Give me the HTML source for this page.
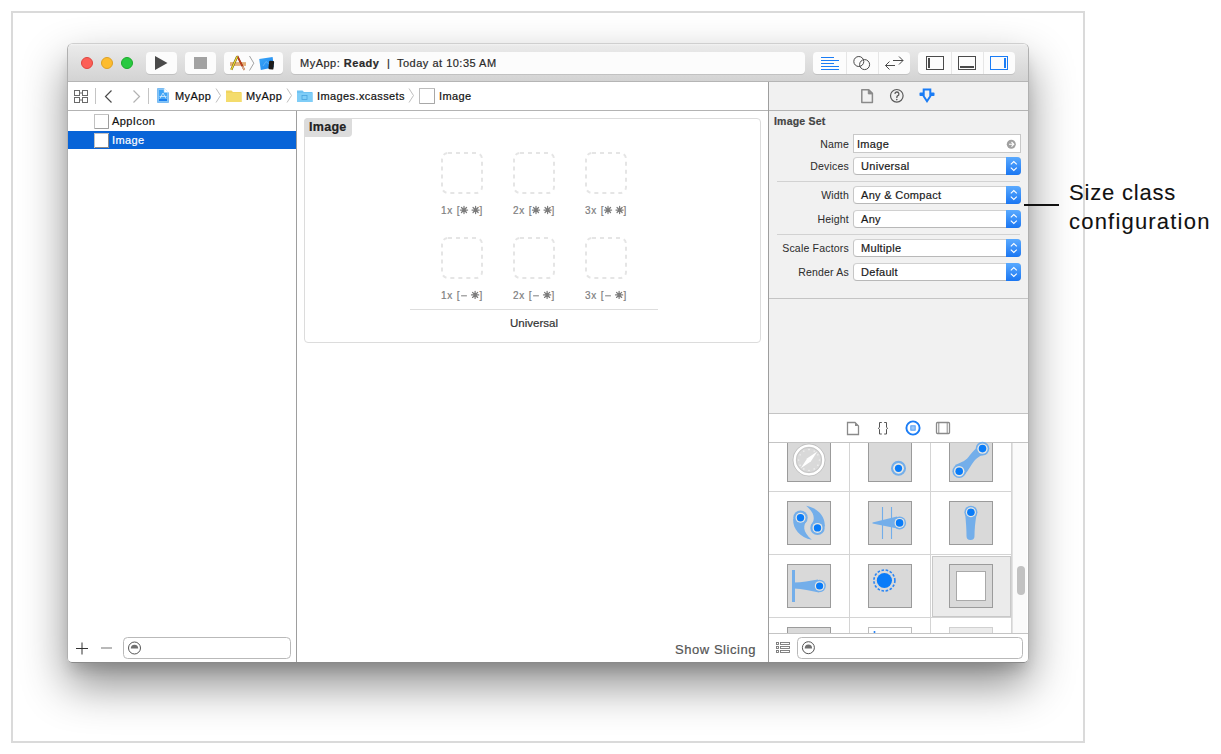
<!DOCTYPE html>
<html><head><meta charset="utf-8">
<style>
*{margin:0;padding:0;box-sizing:border-box}
html,body{width:1221px;height:754px;overflow:hidden;background:#fff;font-family:"Liberation Sans",sans-serif;color:#222}
.a{position:absolute}
.tx{position:absolute;line-height:1;white-space:nowrap;-webkit-text-stroke:0.2px currentColor}
svg{position:absolute;overflow:visible}
#frame{left:11px;top:11px;width:1074px;height:732px;border:2px solid #dadada}
#shadow{left:67px;top:43px;width:962px;height:620px;border-radius:6px 6px 5px 5px;box-shadow:0 22px 45px rgba(0,0,0,0.45),0 10px 14px -4px rgba(0,0,0,0.14)}
#win{left:67px;top:43px;width:962px;height:620px;border-radius:6px 6px 5px 5px;background:#fff;border:1px solid #b0b0b0;border-top-color:#cfcfcf;border-bottom-color:#8a8a8a}
#title{left:68px;top:44px;width:960px;height:38px;background:linear-gradient(#f3f3f3 0px,#eaeaea 2px,#d3d3d3 37px);border-bottom:1px solid #b5b5b5;border-radius:5px 5px 0 0}
.light{width:12px;height:12px;border-radius:50%;top:57px}
.btn{background:#fcfcfc;border-radius:4px;box-shadow:0 1px 0 rgba(0,0,0,0.10)}
.sep{background:#e6e6e6;width:1px}
.t11{font-size:11px;letter-spacing:0.4px}
.hl{height:1px}
.popup{position:absolute;left:853px;width:168px;height:18px;background:#fff;border:1px solid #c6c6c6;border-top-color:#d0d0d0;border-bottom-color:#b8b8b8;border-radius:4px}
.popup .st{position:absolute;right:-1px;top:-1px;width:15.5px;height:18px;border-radius:0 4px 4px 0;background:linear-gradient(#5aaaff,#1a76f2)}
.popup .st svg{left:0;top:0}
.lbl{font-size:10.5px;color:#2e2e2e;letter-spacing:0.2px;-webkit-text-stroke:0.05px currentColor}
.val{font-size:11px;color:#1a1a1a;letter-spacing:0.3px}
.slot{position:absolute;width:42px;height:42px}
.sl{font-size:10px;color:#808080;letter-spacing:0.8px}
.ic{position:absolute;width:44px;height:44px;background:#d9d9d9;border:1px solid #9b9b9b}
</style></head><body>
<div id="frame" class="a"></div>
<div id="shadow" class="a"></div>
<div id="win" class="a"></div>

<!-- TITLE BAR -->
<div id="title" class="a"></div>
<div class="a light" style="left:81px;background:#fc5f57;border:0.5px solid #e0443e"></div>
<div class="a light" style="left:101px;background:#fdbc2e;border:0.5px solid #dea123"></div>
<div class="a light" style="left:121px;background:#28c940;border:0.5px solid #1aab29"></div>
<div class="a btn" style="left:146px;top:52px;width:31px;height:22px"></div>
<div class="a btn" style="left:185px;top:52px;width:31px;height:22px"></div>
<div class="a btn" style="left:224px;top:52px;width:59px;height:22px"></div>
<div class="a btn" style="left:291px;top:52px;width:514px;height:22px"></div>
<div class="a btn" style="left:813px;top:52px;width:97px;height:22px"></div>
<div class="a btn" style="left:918px;top:52px;width:97px;height:22px"></div>
<div class="a sep" style="left:846px;top:52px;height:22px"></div>
<div class="a sep" style="left:878px;top:52px;height:22px"></div>
<div class="a sep" style="left:951px;top:52px;height:22px"></div>
<div class="a sep" style="left:983px;top:52px;height:22px"></div>
<!-- play / stop -->
<svg style="left:0;top:0" width="1" height="1"><path d="M155 56 L167.5 63 L155 70 Z" fill="#4a4a4a"/><rect x="194" y="57" width="13" height="12" fill="#a2a2a2"/></svg>
<!-- scheme icons -->
<svg style="left:0;top:0" width="1" height="1">
  <defs><linearGradient id="dg" x1="0" y1="0" x2="1" y2="1"><stop offset="0" stop-color="#3aa6f8"/><stop offset="1" stop-color="#1f86ee"/></linearGradient></defs>
  <rect x="230" y="62.3" width="16" height="3.4" fill="#e8b47c"/>
  <path d="M230 62.8H246M230 65.3H246" stroke="#d09a60" stroke-width="0.5"/>
  <path d="M237.3 56L244.3 69.8" stroke="#8a2a10" stroke-width="1.7"/>
  <path d="M237.3 56L244.3 69.8" stroke="#c8401c" stroke-width="1.1"/>
  <path d="M242.5 66.3L244.5 70" stroke="#d8b090" stroke-width="1.6"/>
  <path d="M231.3 69.8L237.3 56.2" stroke="#6a5a20" stroke-width="2.2"/>
  <path d="M231.3 69.8L237.3 56.2" stroke="#f2e030" stroke-width="1.2"/>
  <path d="M249.5 56L253.8 63.2L249.5 70.5" stroke="#8a8a8a" fill="none" stroke-width="0.8"/>
  <path d="M259.2 58.9L272.6 57.1L273.9 67.3L260.8 69.9Z" fill="url(#dg)"/>
  <path d="M263 66L266 61.5L269 64" stroke="#8ccaf8" stroke-width="0.5" fill="none"/>
  <rect x="268.8" y="60.8" width="5" height="8.6" rx="1" fill="#1c1c1c" transform="rotate(6 271.3 65)"/>
</svg>
<!-- status -->
<div class="tx t11" style="left:300px;top:58px;color:#2a2a2a;letter-spacing:0.5px">MyApp: <b>Ready</b></div><div class="tx t11" style="left:387px;top:58px;color:#2a2a2a">|</div><div class="tx t11" style="left:397px;top:58px;color:#2a2a2a;letter-spacing:0.5px">Today at 10:35 AM</div>
<!-- editor buttons -->
<svg style="left:0;top:0" width="1" height="1" fill="none">
  <g stroke="#1a7cf5" stroke-width="1">
    <path d="M821 57.5H834M821 60.5H839M821 63.5H834M821 66.5H839M821 69.5H839"/>
  </g>
  <g stroke="#4a4a4a" stroke-width="1">
    <circle cx="858.8" cy="61.5" r="5"/><circle cx="864.6" cy="64.6" r="5"/>
    <path d="M893 60.5H903M899 56.5L903 60.5L899 64.5M885.5 65.5H895M889.5 61.5L885.5 65.5L889.5 69.5"/>
    <rect x="926.5" y="56.5" width="17" height="13"/>
    <rect x="958.5" y="56.5" width="17" height="13"/>
  </g>
  <rect x="928" y="58" width="2" height="10" fill="#4a4a4a"/>
  <rect x="960" y="66" width="14" height="2" fill="#4a4a4a"/>
  <rect x="990.5" y="56.5" width="17" height="13" stroke="#1a7cf5"/>
  <rect x="1004" y="58" width="2" height="10" fill="#1a7cf5"/>
</svg>

<!-- BREADCRUMB BAR -->
<div class="a" style="left:68px;top:82px;width:700px;height:29px;background:#fff;border-bottom:1px solid #b3b3b3"></div>
<div class="a" style="left:769px;top:82px;width:259px;height:29px;background:#f1f1f1;border-bottom:1px solid #b3b3b3"></div>
<div class="a" style="left:768px;top:82px;width:1px;height:580px;background:#9e9e9e"></div>
<div class="a" style="left:296px;top:111px;width:1px;height:551px;background:#9e9e9e"></div>
<svg style="left:0;top:0" width="1" height="1" fill="none">
  <g stroke="#6a6a6a" stroke-width="1">
    <rect x="74.5" y="90.5" width="5" height="5"/><rect x="82.5" y="90.5" width="5" height="5"/>
    <rect x="74.5" y="97.5" width="5" height="5"/><rect x="82.5" y="97.5" width="5" height="5"/>
    <path d="M80 93H82M80 100H82"/>
  </g>
  <path d="M95.5 88V104M148.5 88V104" stroke="#c4c4c4"/>
  <path d="M111.5 90.5L105.5 96.5L111.5 102.5" stroke="#4a4a4a" stroke-width="1.2"/>
  <path d="M133.5 90.5L139.5 96.5L133.5 102.5" stroke="#b2b2b2" stroke-width="1.2"/>
  <path d="M216 88.5L220.5 95.5L216 102.5M287 88.5L291.5 95.5L287 102.5M409 88.5L413.5 95.5L409 102.5" stroke="#b8b8b8" stroke-width="0.9"/>
</svg>
<svg style="left:0;top:0" width="1" height="1">
  <defs><linearGradient id="pg" x1="0" y1="0" x2="0" y2="1"><stop offset="0" stop-color="#3aa2f6"/><stop offset="1" stop-color="#4aa8f6"/></linearGradient></defs>
  <path d="M157.5 88.5H164L168.5 92.5V102.5H157.5Z" fill="#82c4f8" stroke="#7cbcf2" stroke-width="1" stroke-linejoin="round"/>
  <rect x="159" y="90" width="8" height="11" fill="url(#pg)"/>
  <path d="M164 88V92.5H169" fill="#fff" stroke="#9ad0f8" stroke-width="0.6"/>
  <path d="M160 98.5L163 93L166 98.5M159.5 96.5H166.5" stroke="#d8ecfc" stroke-width="0.8" fill="none"/>
  <rect x="159" y="99" width="8" height="2" fill="#1a80f0"/>
  <path d="M226 90.5H231.5L233 92H241.5V102H226Z" fill="#f0d460"/>
  <rect x="226" y="93" width="15.5" height="9" fill="#f4dc6c"/>
  <path d="M297 90.5H302.5L304 92H312.5V102H297Z" fill="#6ec2f2"/>
  <rect x="297" y="93" width="15.5" height="9" fill="#7fcdf7"/>
  <rect x="302" y="95.5" width="5" height="4" fill="none" stroke="#4aa5de" stroke-width="0.8"/>
  <rect x="419.5" y="88.5" width="15" height="15" fill="#fff" stroke="#bdbdbd"/>
  <path d="M420 103.5H434.5V89" stroke="#a8a8a8" fill="none"/>
</svg>
<div class="tx t11" style="left:175px;top:91px;color:#111">MyApp</div>
<div class="tx t11" style="left:246px;top:91px;color:#111">MyApp</div>
<div class="tx t11" style="left:317px;top:91px;color:#111">Images.xcassets</div>
<div class="tx t11" style="left:439px;top:91px;color:#111">Image</div>

<!-- NAVIGATOR -->
<div class="a" style="left:68px;top:131px;width:228px;height:18px;background:#0864d8"></div>
<svg style="left:0;top:0" width="1" height="1">
  <rect x="94.5" y="114.5" width="14" height="14" fill="#fff" stroke="#c2c2c2"/>
  <path d="M95 128.5H108.5V115" stroke="#9e9e9e" fill="none"/>
  <rect x="94.5" y="133.5" width="14" height="14" fill="#fff" stroke="#c2c2c2"/>
  <path d="M95 147.5H108.5V134" stroke="#8a8a8a" fill="none"/>
</svg>
<div class="tx t11" style="left:112px;top:116px;color:#111">AppIcon</div>
<div class="tx t11" style="left:112px;top:135px;color:#fff">Image</div>
<!-- nav bottom -->
<svg style="left:0;top:0" width="1" height="1" fill="none">
  <path d="M76 648.5H88M82 642.5V654.5" stroke="#333" stroke-width="1"/>
  <path d="M101 648H112" stroke="#8a8a8a" stroke-width="1.2"/>
  <rect x="123.5" y="637.5" width="167" height="21" rx="4" stroke="#b9b9b9"/>
  <circle cx="134.5" cy="648" r="6" stroke="#555" stroke-width="1"/>
  <path d="M130.8 648.6A3.7 3.9 0 0 1 138.2 648.6Z" fill="#707070"/>
  <path d="M798 647.5" />
</svg>

<!-- EDITOR -->
<div class="a" style="left:304px;top:118px;width:457px;height:225px;border:1px solid #dcdcdc;border-radius:4px"></div>
<div class="a" style="left:304px;top:118px;width:48px;height:19px;background:#dcdcdc;border-radius:4px 0 4px 0"></div>
<div class="tx" style="left:309px;top:121px;font-size:12.5px;font-weight:bold;color:#222;letter-spacing:0.3px">Image</div>
<svg style="left:0;top:0" width="1" height="1" fill="none">
  <g stroke="#e5e5e5" stroke-width="2" stroke-dasharray="4 4">
    <rect x="442" y="153" width="40" height="40" rx="6"/>
    <rect x="514" y="153" width="40" height="40" rx="6"/>
    <rect x="586" y="153" width="40" height="40" rx="6"/>
    <rect x="442" y="238" width="40" height="40" rx="6"/>
    <rect x="514" y="238" width="40" height="40" rx="6"/>
    <rect x="586" y="238" width="40" height="40" rx="6"/>
  </g>
  <path d="M410 309.5H658" stroke="#dddddd"/>
</svg>
<div class="tx sl" style="left:441px;top:206px">1x [</div><div class="tx sl" style="left:479.5px;top:206px">]</div>
<div class="tx sl" style="left:441px;top:291px">1x [</div><div class="tx sl" style="left:479.5px;top:291px">]</div>
<div class="tx sl" style="left:513px;top:206px">2x [</div><div class="tx sl" style="left:551.5px;top:206px">]</div>
<div class="tx sl" style="left:513px;top:291px">2x [</div><div class="tx sl" style="left:551.5px;top:291px">]</div>
<div class="tx sl" style="left:585px;top:206px">3x [</div><div class="tx sl" style="left:623.5px;top:206px">]</div>
<div class="tx sl" style="left:585px;top:291px">3x [</div><div class="tx sl" style="left:623.5px;top:291px">]</div>
<svg style="left:0;top:0" width="1" height="1"><g transform="translate(464.0 210.0)"><path d="M0 -3.6V3.6M-3.6 0H3.6M-2.55 -2.55L2.55 2.55M-2.55 2.55L2.55 -2.55" stroke="#7c7c7c" stroke-width="1.25" stroke-linecap="round"/><circle r="1.2" fill="#7c7c7c"/></g><g transform="translate(475.6 210.0)"><path d="M0 -3.6V3.6M-3.6 0H3.6M-2.55 -2.55L2.55 2.55M-2.55 2.55L2.55 -2.55" stroke="#7c7c7c" stroke-width="1.25" stroke-linecap="round"/><circle r="1.2" fill="#7c7c7c"/></g><g transform="translate(475.1 294.9)"><path d="M0 -3.6V3.6M-3.6 0H3.6M-2.55 -2.55L2.55 2.55M-2.55 2.55L2.55 -2.55" stroke="#7c7c7c" stroke-width="1.25" stroke-linecap="round"/><circle r="1.2" fill="#7c7c7c"/></g><path d="M461.1 295.8H466.9" stroke="#8a8a8a" stroke-width="1.1"/><g transform="translate(536.0 210.0)"><path d="M0 -3.6V3.6M-3.6 0H3.6M-2.55 -2.55L2.55 2.55M-2.55 2.55L2.55 -2.55" stroke="#7c7c7c" stroke-width="1.25" stroke-linecap="round"/><circle r="1.2" fill="#7c7c7c"/></g><g transform="translate(547.6 210.0)"><path d="M0 -3.6V3.6M-3.6 0H3.6M-2.55 -2.55L2.55 2.55M-2.55 2.55L2.55 -2.55" stroke="#7c7c7c" stroke-width="1.25" stroke-linecap="round"/><circle r="1.2" fill="#7c7c7c"/></g><g transform="translate(547.1 294.9)"><path d="M0 -3.6V3.6M-3.6 0H3.6M-2.55 -2.55L2.55 2.55M-2.55 2.55L2.55 -2.55" stroke="#7c7c7c" stroke-width="1.25" stroke-linecap="round"/><circle r="1.2" fill="#7c7c7c"/></g><path d="M533.1 295.8H538.9" stroke="#8a8a8a" stroke-width="1.1"/><g transform="translate(608.0 210.0)"><path d="M0 -3.6V3.6M-3.6 0H3.6M-2.55 -2.55L2.55 2.55M-2.55 2.55L2.55 -2.55" stroke="#7c7c7c" stroke-width="1.25" stroke-linecap="round"/><circle r="1.2" fill="#7c7c7c"/></g><g transform="translate(619.6 210.0)"><path d="M0 -3.6V3.6M-3.6 0H3.6M-2.55 -2.55L2.55 2.55M-2.55 2.55L2.55 -2.55" stroke="#7c7c7c" stroke-width="1.25" stroke-linecap="round"/><circle r="1.2" fill="#7c7c7c"/></g><g transform="translate(619.1 294.9)"><path d="M0 -3.6V3.6M-3.6 0H3.6M-2.55 -2.55L2.55 2.55M-2.55 2.55L2.55 -2.55" stroke="#7c7c7c" stroke-width="1.25" stroke-linecap="round"/><circle r="1.2" fill="#7c7c7c"/></g><path d="M605.1 295.8H610.9" stroke="#8a8a8a" stroke-width="1.1"/></svg>
<div class="tx" style="left:510px;top:318px;font-size:11.5px;color:#333">Universal</div>
<div class="tx" style="left:675px;top:643px;font-size:13px;color:#555;letter-spacing:0.55px">Show Slicing</div>

<!-- INSPECTOR -->
<div class="a" style="left:769px;top:111px;width:259px;height:303px;background:#f1f1f1;border-bottom:1px solid #c4c4c4"></div>
<svg style="left:0;top:0" width="1" height="1" fill="none">
  <path d="M861.8 89.8H868.8L872.4 93.4V102.4H861.8Z" stroke="#8a8a8a" stroke-width="1.5" stroke-linejoin="round"/><path d="M868.3 90V93.9H872.2Z" fill="#8a8a8a" stroke="#8a8a8a" stroke-width="1"/>
  <circle cx="896.8" cy="95.8" r="6.3" stroke="#5a5a5a" stroke-width="1.2"/>
  <path d="M894.9 93.9A2 2 0 1 1 897.5 95.9C896.9 96.3 896.8 96.8 896.8 98" stroke="#5a5a5a" stroke-width="1.3"/>
  <circle cx="896.8" cy="99.6" r="0.8" fill="#5a5a5a"/>
  <path d="M923.7 89.5H930.3V96.3L927 101.3L923.7 96.3Z" stroke="#1a7cf5" stroke-width="2"/><rect x="919.5" y="92.6" width="4.5" height="3.5" rx="0.8" fill="#1a7cf5"/><rect x="930" y="92.6" width="4.5" height="3.5" rx="0.8" fill="#1a7cf5"/>
</svg>
<div class="tx" style="left:774px;top:116px;font-size:10.5px;font-weight:bold;color:#444;letter-spacing:0.2px">Image Set</div>
<div class="tx lbl" style="right:372px;top:139px">Name</div>
<div class="a" style="left:853px;top:134px;width:168px;height:19px;background:#fff;border:1px solid #c8c8c8"></div>
<div class="tx val" style="left:857px;top:139px">Image</div>
<svg style="left:0;top:0" width="1" height="1"><circle cx="1011.3" cy="144.3" r="4.5" fill="#a0a0a0"/><path d="M1009 144.3H1013.5M1011.5 142L1013.8 144.3L1011.5 146.6" stroke="#fff" stroke-width="1.1" fill="none"/></svg>
<div class="tx lbl" style="right:372px;top:161px">Devices</div>
<div class="popup" style="top:157px"><div class="st"><svg width="16" height="18"><path d="M4.8 7.3L7.8 4.5L10.8 7.3M4.8 10.7L7.8 13.5L10.8 10.7" stroke="#fff" stroke-width="1.1" fill="none"/></svg></div></div>
<div class="tx val" style="left:861px;top:161px">Universal</div>
<div class="a hl" style="left:777px;top:181px;width:243px;background:#d2d2d2"></div>
<div class="tx lbl" style="right:372px;top:190px">Width</div>
<div class="popup" style="top:186px"><div class="st"><svg width="16" height="18"><path d="M4.8 7.3L7.8 4.5L10.8 7.3M4.8 10.7L7.8 13.5L10.8 10.7" stroke="#fff" stroke-width="1.1" fill="none"/></svg></div></div>
<div class="tx val" style="left:861px;top:190px">Any &amp; Compact</div>
<div class="tx lbl" style="right:372px;top:214px">Height</div>
<div class="popup" style="top:210px"><div class="st"><svg width="16" height="18"><path d="M4.8 7.3L7.8 4.5L10.8 7.3M4.8 10.7L7.8 13.5L10.8 10.7" stroke="#fff" stroke-width="1.1" fill="none"/></svg></div></div>
<div class="tx val" style="left:861px;top:214px">Any</div>
<div class="a hl" style="left:777px;top:234px;width:243px;background:#d2d2d2"></div>
<div class="tx lbl" style="right:372px;top:243px">Scale Factors</div>
<div class="popup" style="top:239px"><div class="st"><svg width="16" height="18"><path d="M4.8 7.3L7.8 4.5L10.8 7.3M4.8 10.7L7.8 13.5L10.8 10.7" stroke="#fff" stroke-width="1.1" fill="none"/></svg></div></div>
<div class="tx val" style="left:861px;top:243px">Multiple</div>
<div class="tx lbl" style="right:372px;top:267px">Render As</div>
<div class="popup" style="top:263px"><div class="st"><svg width="16" height="18"><path d="M4.8 7.3L7.8 4.5L10.8 7.3M4.8 10.7L7.8 13.5L10.8 10.7" stroke="#fff" stroke-width="1.1" fill="none"/></svg></div></div>
<div class="tx val" style="left:861px;top:267px">Default</div>
<div class="a hl" style="left:769px;top:298px;width:259px;background:#c4c4c4"></div>

<!-- LIBRARY -->
<div class="a" style="left:769px;top:414px;width:259px;height:29px;background:#fff;border-bottom:1px solid #c4c4c4"></div>
<svg style="left:0;top:0" width="1" height="1" fill="none">
  <path d="M847.5 422.5H855L858.5 426V434.5H847.5Z" stroke="#8a8a8a" stroke-width="1.3"/><path d="M855 422.5V426H858.5Z" fill="#8a8a8a"/>
  <path d="M881.8 422.5H879.5V427.4L878.3 428.3L879.5 429.2V434H881.8M884.2 422.5H886.5V427.4L887.7 428.3L886.5 429.2V434H884.2" stroke="#555" stroke-width="1"/>
  <circle cx="913" cy="428" r="6.6" stroke="#1a7cf5" stroke-width="1.9"/>
  <rect x="910.8" y="425.8" width="4.4" height="4.4" fill="#9cc8f8" stroke="#4a98f5" stroke-width="0.9"/>
  <rect x="936.5" y="422.5" width="13" height="11" rx="1" stroke="#8a8a8a" stroke-width="1.3"/>
  <path d="M938.8 423V433M947.2 423V433" stroke="#8a8a8a" stroke-width="1"/>
</svg>
<!-- grid -->
<div class="a" style="left:769px;top:443px;width:259px;height:190px;background:#fff;overflow:hidden">
</div>
<div class="a" style="left:1012px;top:443px;width:15px;height:190px;background:#fafafa;border-left:1px solid #e2e2e2"></div>
<div class="a" style="left:1017px;top:566px;width:8px;height:29px;background:#c2c2c2;border-radius:4px"></div>
<div class="a" style="left:849px;top:443px;width:1px;height:190px;background:#d4d4d4"></div>
<div class="a" style="left:930px;top:443px;width:1px;height:190px;background:#d4d4d4"></div>
<div class="a" style="left:1011px;top:443px;width:1px;height:190px;background:#d4d4d4"></div>
<div class="a hl" style="left:769px;top:491px;width:243px;background:#d4d4d4"></div>
<div class="a hl" style="left:769px;top:554px;width:243px;background:#d4d4d4"></div>
<div class="a hl" style="left:769px;top:617px;width:243px;background:#d4d4d4"></div>
<div class="a" style="left:932px;top:556px;width:79px;height:61px;background:#ebebeb;border:1px solid #c8c8c8"></div>
<!-- icons row1 (clipped at top) -->
<div class="a" style="left:769px;top:443px;width:243px;height:190px;overflow:hidden">
  <div class="ic" style="left:18px;top:-5px"></div>
  <div class="ic" style="left:99px;top:-5px"></div>
  <div class="ic" style="left:180px;top:-5px"></div>
  <div class="ic" style="left:18px;top:58px"></div>
  <div class="ic" style="left:99px;top:58px"></div>
  <div class="ic" style="left:180px;top:58px"></div>
  <div class="ic" style="left:18px;top:121px"></div>
  <div class="ic" style="left:99px;top:121px"></div>
  <div class="ic" style="left:180px;top:121px"></div>
  <div class="ic" style="left:18px;top:184px"></div>
  <div class="ic" style="left:99px;top:184px;background:#fff;border-color:#bdbdbd"></div>
  <div class="ic" style="left:180px;top:184px;background:#ececec;border-color:#d0d0d0"></div>
</div>
<svg style="left:0;top:0" width="1" height="1">
  <!-- compass -->
  <circle cx="809" cy="460" r="16" fill="none" stroke="#bcbcbc" stroke-width="1"/>
  <circle cx="809" cy="460" r="14.3" fill="none" stroke="#fff" stroke-width="2.3"/>
  <circle cx="809" cy="460" r="12.6" fill="none" stroke="#c2c2c2" stroke-width="0.8"/>
  <g fill="#fff"><circle cx="819.30" cy="460.00" r="0.6"/><circle cx="817.92" cy="465.15" r="0.6"/><circle cx="814.15" cy="468.92" r="0.6"/><circle cx="809.00" cy="470.30" r="0.6"/><circle cx="803.85" cy="468.92" r="0.6"/><circle cx="800.08" cy="465.15" r="0.6"/><circle cx="798.70" cy="460.00" r="0.6"/><circle cx="800.08" cy="454.85" r="0.6"/><circle cx="803.85" cy="451.08" r="0.6"/><circle cx="809.00" cy="449.70" r="0.6"/><circle cx="814.15" cy="451.08" r="0.6"/><circle cx="817.92" cy="454.85" r="0.6"/></g>
  <path d="M817.3 451.6L810.8 461.6L800.8 468.2L807.3 458.3Z" fill="#fff"/>
  <!-- tap -->
  <circle cx="898.5" cy="468.3" r="7.5" fill="#73aeea"/>
  <circle cx="898.5" cy="468.3" r="5.4" fill="#ebe8e2"/>
  <circle cx="898.5" cy="468.3" r="3.6" fill="#0a7cf8"/>
  <!-- pinch -->
  <path d="M955 465C962 462 966 461 970 455C974 450 978 446 985 443L987 454C980 455 976 458 972 464C968 470 966 474 962 477Z" fill="#73aeea"/>
  <circle cx="959.2" cy="471.2" r="6.8" fill="#73aeea"/><circle cx="959.2" cy="471.2" r="5.2" fill="#ebe8e2"/><circle cx="959.2" cy="471.2" r="3.8" fill="#0a7cf8"/>
  <circle cx="982.5" cy="448.6" r="6.8" fill="#73aeea"/><circle cx="982.5" cy="448.6" r="5.2" fill="#ebe8e2"/><circle cx="982.5" cy="448.6" r="3.8" fill="#0a7cf8"/>
  <!-- rotation -->
  <path d="M811.8 539.8C800 537.5 792.6 529 793.2 519L800.5 517.7L807.2 520.3C803.2 525 802 531.5 811.8 539.8Z" fill="#73aeea"/><circle cx="800.5" cy="517.7" r="7.2" fill="#73aeea"/><circle cx="800.5" cy="517.7" r="5" fill="#ebe8e2"/><circle cx="800.5" cy="517.7" r="3.7" fill="#0a7cf8"/>
  <g transform="rotate(180 809 522.8)"><path d="M811.8 539.8C800 537.5 792.6 529 793.2 519L800.5 517.7L807.2 520.3C803.2 525 802 531.5 811.8 539.8Z" fill="#73aeea"/><circle cx="800.5" cy="517.7" r="7.2" fill="#73aeea"/><circle cx="800.5" cy="517.7" r="5" fill="#ebe8e2"/><circle cx="800.5" cy="517.7" r="3.7" fill="#0a7cf8"/></g>
  <!-- swipe -->
  <path d="M882.5 507V539M891.5 507V539" stroke="#73aeea" stroke-width="1.1"/>
  <path d="M872.5 522.5L897 516.5L900 529L872.5 523.5Z" fill="#73aeea"/>
  <circle cx="899.6" cy="522.9" r="6.5" fill="#73aeea"/><circle cx="899.6" cy="522.9" r="5" fill="#ebe8e2"/><circle cx="899.6" cy="522.9" r="3.8" fill="#0a7cf8"/>
  <!-- long press/pan -->
  <path d="M965 512C966 522 966.5 530 966.5 536A4 4 0 0 0 974.5 536C974.5 530 975 522 977 512Z" fill="#73aeea"/>
  <circle cx="970.9" cy="512.2" r="6.5" fill="#73aeea"/><circle cx="970.9" cy="512.2" r="5" fill="#ebe8e2"/><circle cx="970.9" cy="512.2" r="3.8" fill="#0a7cf8"/>
  <!-- edge pan -->
  <rect x="792" y="570" width="3" height="32" fill="#73aeea"/>
  <path d="M794 582.5C802 582.5 810 580.5 818 579.5L819 592.5C811 591 802 588.5 794 588.5Z" fill="#73aeea"/>
  <circle cx="819.6" cy="586" r="6.2" fill="#73aeea"/><circle cx="819.6" cy="586" r="4.8" fill="#ebe8e2"/><circle cx="819.6" cy="586" r="3.6" fill="#0a7cf8"/>
  <!-- dashed circle -->
  <circle cx="884.4" cy="580.5" r="10.5" fill="none" stroke="#2a86f5" stroke-width="1.6" stroke-dasharray="2.6 1.6"/>
  <circle cx="884.4" cy="580.5" r="7.6" fill="#0a7cf8"/>
  <!-- view -->
  <circle cx="874.5" cy="632" r="1" fill="#1a7cf5"/>
  <rect x="956.5" y="571.5" width="29" height="29" fill="#fff" stroke="#a9a9a9"/>
</svg>

<!-- LIBRARY BOTTOM BAR -->
<div class="a" style="left:769px;top:633px;width:259px;height:1px;background:#c4c4c4"></div>
<svg style="left:0;top:0" width="1" height="1" fill="none">
  <g stroke="#777" stroke-width="0.9">
    <rect x="776.5" y="642.5" width="2" height="2"/><rect x="780.5" y="642.5" width="9" height="2"/>
    <rect x="776.5" y="646.5" width="2" height="2"/><rect x="780.5" y="646.5" width="9" height="2"/>
    <rect x="776.5" y="650.5" width="2" height="2"/><rect x="780.5" y="650.5" width="9" height="2"/>
  </g>
  <rect x="797.5" y="637.5" width="225" height="21" rx="4" stroke="#b9b9b9"/>
  <circle cx="808.4" cy="647.7" r="6" stroke="#555" stroke-width="1"/>
  <path d="M804.7 648.4A3.7 3.9 0 0 1 812.1 648.4Z" fill="#707070"/>
</svg>

<!-- ANNOTATION -->
<div class="a" style="left:1024px;top:204px;width:35px;height:2px;background:#111"></div>
<div class="tx" style="left:1069px;top:182px;font-size:22px;letter-spacing:0.8px;color:#111;-webkit-text-stroke:0.1px currentColor">Size class</div>
<div class="tx" style="left:1069px;top:211px;font-size:22px;letter-spacing:1.2px;color:#111;-webkit-text-stroke:0.1px currentColor">configuration</div>
</body></html>
